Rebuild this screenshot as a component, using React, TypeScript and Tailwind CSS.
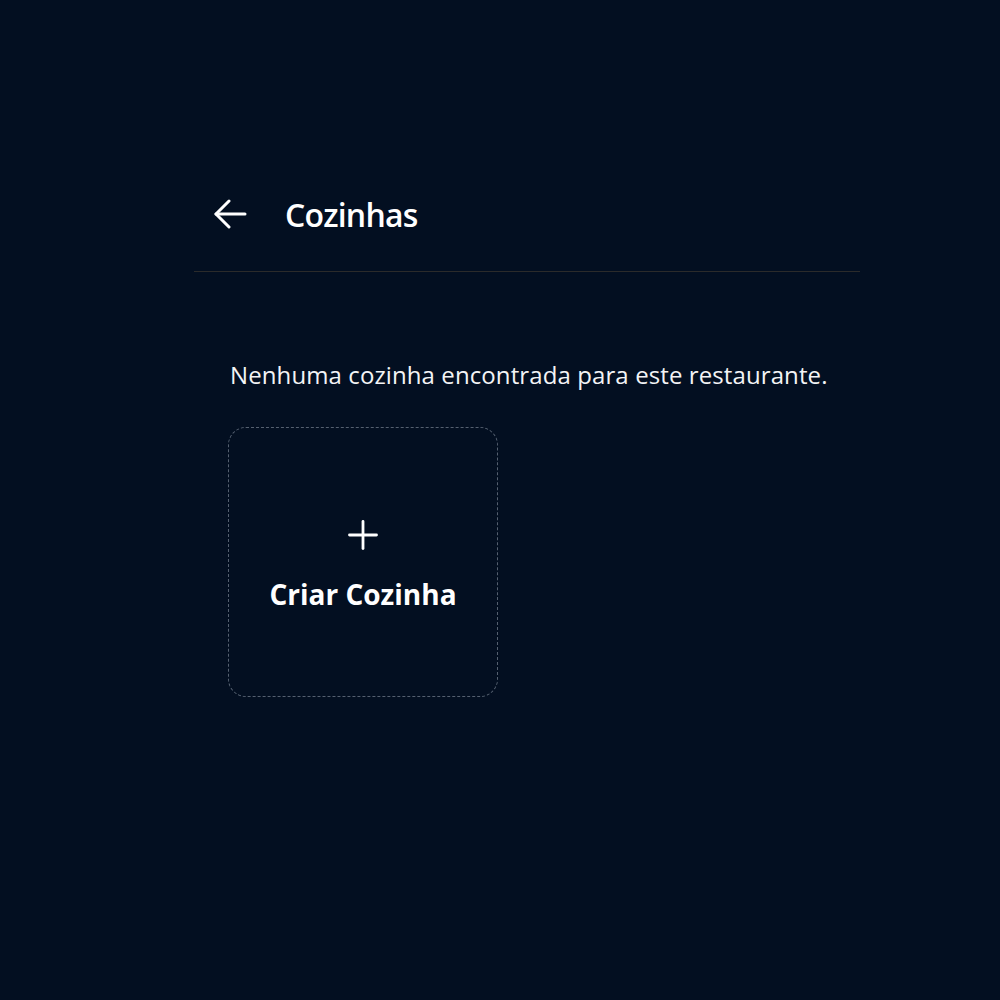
import { FC } from "react";

const ArrowLeft: FC = () => (
  <svg width="33" height="30" viewBox="0 0 33 30" fill="none" stroke="currentColor" strokeWidth="3" strokeLinecap="round" strokeLinejoin="round">
    <path d="M31 15H2" />
    <path d="M15 2L2 15l13 13" />
  </svg>
);

const Plus: FC = () => (
  <svg width="30" height="30" viewBox="0 0 30 30" fill="none" stroke="currentColor" strokeWidth="2.8" strokeLinecap="round">
    <path d="M15 1.5v27" />
    <path d="M1.5 15h27" />
  </svg>
);

const App: FC = () => {
  return (
    <div
      className="min-h-screen w-full bg-[#030f21] text-white"
      style={{ fontFamily: '"Open Sans", "Noto Sans", sans-serif' }}
    >
      <div className="ml-[194px] w-[666px] pt-[193px]">
        <header className="flex h-[44px] items-center gap-[38px] pl-[20px]">
          <button className="-mt-[2px] flex items-center justify-center text-white">
            <ArrowLeft />
          </button>
          <h1 className="text-[32px] font-semibold leading-[44px] tracking-tight">Cozinhas</h1>
        </header>
        <div className="mt-[34px] h-px w-full bg-[#2b2b2b]" />
        <main className="pl-[34px] pt-[87px]">
          <p className="pl-[2px] text-[24px] leading-[32px] tracking-[0.1px] text-gray-100">
            Nenhuma cozinha encontrada para este restaurante.
          </p>
          <button className="mt-[36px] flex h-[270px] w-[270px] flex-col items-center justify-start gap-[26px] rounded-[18px] border border-dashed border-[#556070] pt-[92px] text-white">
            <Plus />
            <span className="text-[28px] font-bold leading-[36px]">Criar Cozinha</span>
          </button>
        </main>
      </div>
    </div>
  );
};

export default App;
